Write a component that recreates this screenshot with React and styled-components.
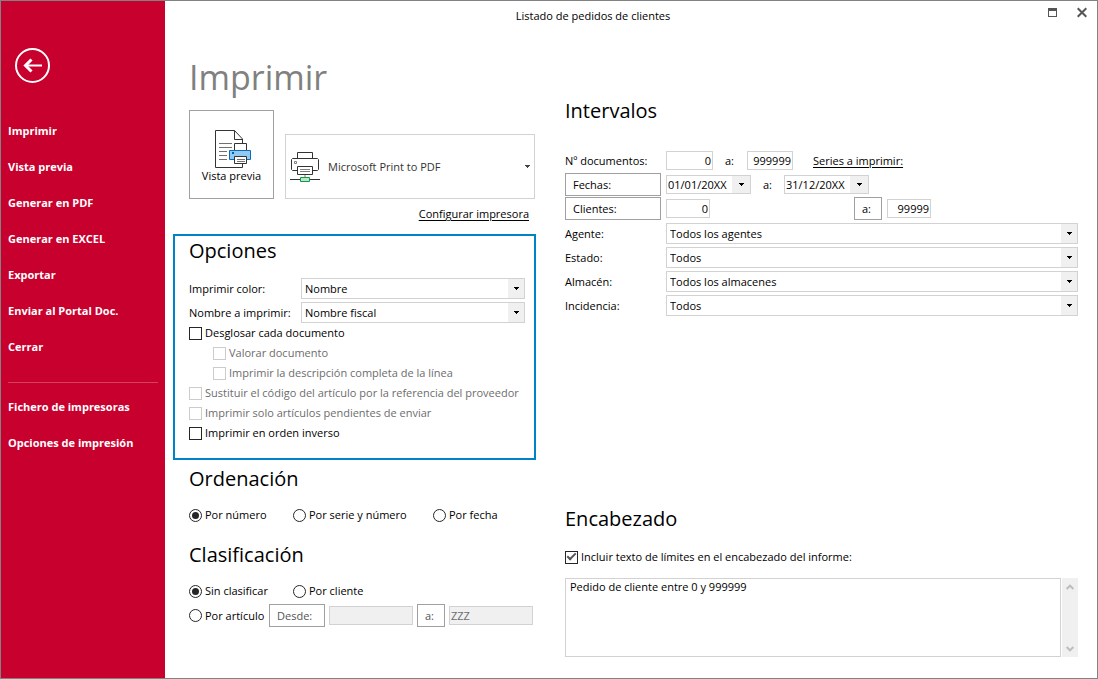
import React from "react";
import styled, { createGlobalStyle, css } from "styled-components";

const Global = createGlobalStyle`
  *, *::before, *::after { box-sizing: border-box; }
  body { margin: 0; background: #fff; }
  body, button, input, select, textarea {
    font-family: "Open Sans", "Noto Sans", sans-serif;
    font-size: 11px;
    line-height: 16px;
    color: #000;
  }
`;

const Window = styled.div`
  display: flex;
  min-height: 100vh;
  border: 1px solid #828282;
`;

/* Sidebar */
const Sidebar = styled.aside`
  flex: none;
  width: 164px;
  padding: 47px 7px 0;
  background: #c8002d;
`;

const BackButton = styled.button`
  display: grid;
  place-items: center;
  width: 35px;
  height: 35px;
  margin: 0 0 30px 7px;
  padding: 0;
  border: 2px solid #fff;
  border-radius: 50%;
  background: none;
`;

const NavItem = styled.a`
  display: block;
  font-size: 11px;
  font-weight: 700;
  line-height: 36px;
  color: #fff;
  text-decoration: none;
  white-space: nowrap;
`;

const Divider = styled.hr`
  height: 1px;
  margin: 17px 0 6px;
  border: 0;
  background: #d6405f;
`;

/* Main area */
const Main = styled.div`
  flex: 1;
  min-width: 0;
`;

const TitleBar = styled.header`
  display: flex;
  height: 30px;
`;

const WindowTitle = styled.div`
  flex: 1;
  font-size: 11px;
  line-height: 30px;
  text-align: center;
`;

const WindowControls = styled.div`
  display: flex;
  gap: 20px;
  padding: 6px 10px 0 27px;
`;

const ControlButton = styled.button`
  display: block;
  height: 11px;
  padding: 0;
  border: 0;
  background: none;
  svg { display: block; }
`;

const Content = styled.main`
  display: grid;
  grid-template-columns: 363px 1fr;
  column-gap: 29px;
  padding: 0 19px 21px 8px;
`;

const Column = styled.div`
  display: flex;
  flex-direction: column;
  min-width: 0;
`;

const PageTitle = styled.h1`
  margin: 0;
  padding: 0 16px;
  font-size: 34px;
  font-weight: 400;
  line-height: 50px;
  color: #808080;
`;

const Heading = styled.h2`
  margin: 0;
  font-size: 20px;
  font-weight: 400;
  line-height: 28px;
`;

const PrintRow = styled.div`
  display: flex;
  align-items: flex-end;
  gap: 11px;
  margin-top: 8px;
  padding: 0 1px 0 16px;
`;

const PreviewButton = styled.button`
  display: flex;
  flex-direction: column;
  align-items: center;
  width: 85px;
  height: 89px;
  padding: 19px 0 0;
  border: 1px solid #a0a0a0;
  background: #fff;
`;

const PrinterPicker = styled.button`
  display: flex;
  align-items: center;
  gap: 8px;
  flex: 1;
  height: 65px;
  padding: 0 4px;
  border: 1px solid #d2d2d2;
  background: #fff;
  color: #333;
  text-align: left;
  span { flex: 1; }
`;

const TextLink = styled.a`
  color: #000;
  text-decoration: underline;
  text-underline-offset: 2px;
  white-space: nowrap;
`;

const ConfigureRow = styled.div`
  display: flex;
  justify-content: flex-end;
  padding: 7px 7px 12px;
`;

const OptionsPanel = styled.section`
  padding: 1px 9px 15px 14px;
  border: 2px solid #0082c8;
`;

const Section = styled.section`
  padding: 0 3px 0 16px;
`;

const Fields = styled.div`
  display: grid;
  grid-template-columns: ${(p) => p.$label}px 1fr;
  align-items: center;
  row-gap: 3px;
  margin-top: ${(p) => p.$top}px;
`;

const SelectBox = styled.div`
  display: grid;
  grid-template-columns: 1fr 16px;
  height: 21px;
  border: 1px solid #d2d2d2;
  select {
    grid-area: 1 / 1 / 2 / 3;
    min-width: 0;
    padding: 0 3px;
    border: 0;
    background: #fff;
    appearance: none;
  }
`;

const ArrowCell = styled.span`
  grid-area: 1 / 2;
  display: grid;
  place-items: center;
  background: #f0f0f0;
  pointer-events: none;
`;

const CheckList = styled.div`
  display: grid;
`;

const Choice = styled.label`
  display: flex;
  align-items: center;
  gap: 3px;
  height: 20px;
  padding-left: ${(p) => (p.$nested ? 24 : 0)}px;
  color: ${(p) => (p.$off ? "#6d6d6d" : "#000")};
  white-space: nowrap;
`;

const mark = css`
  appearance: none;
  display: grid;
  place-items: center;
  flex: none;
  width: 13px;
  height: 13px;
  margin: 0;
  border: 1px solid #262626;
  background: #fff;
`;

const CheckInput = styled.input.attrs({ type: "checkbox" })`
  ${mark}
  &:disabled { border-color: #ccc; }
  &:checked::after {
    content: "";
    width: 9px;
    height: 5px;
    margin-top: -3px;
    border: solid #555;
    border-width: 0 0 2px 2px;
    transform: rotate(-45deg);
  }
`;

const RadioInput = styled.input.attrs({ type: "radio" })`
  ${mark}
  border-radius: 50%;
  &:checked::after {
    content: "";
    width: 7px;
    height: 7px;
    border-radius: 50%;
    background: #262626;
  }
`;

const RadioRow = styled.div`
  display: grid;
  grid-template-columns: 104px 140px 1fr;
  margin-top: 12px;
`;

const ArticleRow = styled.div`
  display: grid;
  grid-template-columns: 76px 56px 84px 28px 84px;
  align-items: center;
  column-gap: 4px;
  margin-top: 2px;
  height: 25px;
`;

const RangeButton = styled.button`
  width: ${(p) => p.$width}px;
  height: 23px;
  padding: 0 7px;
  border: 1px solid #a0a0a0;
  background: #fff;
  text-align: left;
  &:disabled { color: #555; }
`;

const TextInput = styled.input`
  width: ${(p) => p.$width}px;
  height: 19px;
  padding: 0 1px;
  border: 1px solid #d2d2d2;
  background: #fff;
  text-align: ${(p) => (p.$number ? "right" : "left")};
  &:disabled { background: #f0f0f0; color: #6d6d6d; }
`;

const DateBox = styled.div`
  display: flex;
  width: 85px;
  height: 19px;
  border: 1px solid #d2d2d2;
  input {
    flex: 1;
    min-width: 0;
    padding: 0 1px;
    border: 0;
  }
  button {
    display: grid;
    place-items: center;
    width: 18px;
    padding: 0;
    border: 0;
    background: #f0f0f0;
  }
`;

const RangeRow = styled.div`
  display: flex;
  align-items: center;
  height: 23px;
`;

const Between = styled.span`
  width: ${(p) => p.$width}px;
  padding-left: 12px;
`;

const RowLink = styled.span`
  margin-left: 20px;
`;

const Spacer = styled.span`
  width: ${(p) => p.$width}px;
`;

const HeaderText = styled.div`
  display: flex;
  gap: 1px;
  height: 79px;
  margin-top: 11px;
`;

const TextArea = styled.textarea`
  flex: 1;
  min-width: 0;
  padding: 0 4px;
  border: 1px solid #d2d2d2;
  resize: none;
`;

const ScrollStrip = styled.div`
  display: flex;
  flex-direction: column;
  justify-content: space-between;
  width: 16px;
  padding: 4px 0 3px;
  background: #f0f0f0;
  button {
    display: grid;
    place-items: center;
    height: 10px;
    padding: 0;
    border: 0;
    background: none;
  }
`;

const Push = styled.div`
  margin-top: ${(p) => p.$top}px;
`;

const DownArrow = ({ color = "#000" }) => (
  <svg width="5" height="3" viewBox="0 0 5 3" fill={color} shapeRendering="crispEdges">
    <path d="M0 0h5v1h-1v1h-1v1h-1v-1h-1v-1h-1z" />
  </svg>
);

const Chevron = ({ down }) => (
  <svg width="8" height="6" viewBox="0 0 8 6" fill="none" stroke="#bcbcbc" strokeWidth="2">
    <path d={down ? "M.7 1 4 4.4 7.3 1" : "M.7 5 4 1.6 7.3 5"} />
  </svg>
);

const PreviewIcon = () => (
  <svg width="41" height="38" viewBox="-4 0 41 38" fill="none" stroke="#333">
    <path d="M27.5 34v3.5H.5V.5h19l8 8.5v4" fill="#fff" />
    <path d="M19.5.5v9h8" />
    <path d="M4 13.5h13M4 17.5h13M4 21.5h8M4 25.5h8M4 29.5h8" stroke="#707070" />
    <path d="M19.5 20v-6.5h12V20" fill="#fff" />
    <path d="M14.5 20.5h21v9h-21z" fill="#92c9f1" stroke="#0a6cbd" />
    <path d="M17 22h2v2h-2z" fill="#0a5ca8" stroke="none" />
    <path d="M19.5 26.5h12v7h-12z" fill="#fff" />
    <path d="M22 29.5h8M22 31.5h8" stroke="#707070" />
  </svg>
);

const PrinterIcon = () => (
  <svg width="30" height="30" viewBox="0 0 30 30" fill="none" stroke="#333">
    <path d="M7.5 6V.5h15V6" />
    <path d="M7 18.5H2.5l-1-1v-10l1-1h25l1 1v10l-1 1H23" />
    <path d="M4.5 9.5h2v2h-2z" stroke="#808080" />
    <path d="M7.5 14.5h15v8h-15z" fill="#fff" />
    <path d="M10 17.5h10M10 19.5h10" stroke="#808080" />
    <path d="M15 23v2" stroke="#bbb" strokeWidth="2" />
    <path d="M0 27.5h10M20 27.5h10" />
    <path d="M10.5 25.5h9v4h-9z" fill="#bfe5c6" stroke="#109a48" />
  </svg>
);

const ComboField = ({ id, label, value }) => (
  <>
    <label htmlFor={id}>{label}</label>
    <SelectBox>
      <select id={id} defaultValue={value}>
        <option>{value}</option>
      </select>
      <ArrowCell><DownArrow /></ArrowCell>
    </SelectBox>
  </>
);

const Check = ({ children, nested, disabled, checked }) => (
  <Choice $nested={nested} $off={disabled}>
    <CheckInput disabled={disabled} defaultChecked={checked} />
    {children}
  </Choice>
);

const Radio = ({ children, name, checked }) => (
  <Choice>
    <RadioInput name={name} defaultChecked={checked} />
    {children}
  </Choice>
);

const DateField = ({ label, value }) => (
  <DateBox>
    <input aria-label={label} defaultValue={value} />
    <button type="button" aria-label="Calendario"><DownArrow /></button>
  </DateBox>
);

const actions = ["Imprimir", "Vista previa", "Generar en PDF", "Generar en EXCEL", "Exportar", "Enviar al Portal Doc.", "Cerrar"];
const tools = ["Fichero de impresoras", "Opciones de impresión"];

export default function App() {
  return (
    <>
      <Global />
      <Window>
        <Sidebar>
          <BackButton aria-label="Volver">
            <svg width="19" height="15" viewBox="0 0 19 15" fill="none" stroke="#fff">
              <path d="M2 7.5h17" strokeWidth="2" />
              <path d="M8.5 1.500 2.500 7.500l6 6" strokeWidth="3" />
            </svg>
          </BackButton>
          <nav>
            {actions.map((t) => <NavItem key={t} href="#">{t}</NavItem>)}
            <Divider />
            {tools.map((t) => <NavItem key={t} href="#">{t}</NavItem>)}
          </nav>
        </Sidebar>
        <Main>
          <TitleBar>
            <WindowTitle>Listado de pedidos de clientes</WindowTitle>
            <WindowControls>
              <ControlButton aria-label="Maximizar">
                <svg width="9" height="11" viewBox="0 0 9 11" fill="none" stroke="#555" shapeRendering="crispEdges">
                  <path d="M.5 1.5h8v8h-8z" />
                  <path d="M0 2.5h9" strokeWidth="3" />
                </svg>
              </ControlButton>
              <ControlButton aria-label="Cerrar ventana">
                <svg width="10" height="11" viewBox="0 0 10 11" fill="none" stroke="#555" strokeWidth="2">
                  <path d="M.7 1.2 9.3 9.8M9.3 1.2.7 9.8" />
                </svg>
              </ControlButton>
            </WindowControls>
          </TitleBar>
          <Content>
            <Column>
              <Push $top={21}><PageTitle>Imprimir</PageTitle></Push>
              <PrintRow>
                <PreviewButton><PreviewIcon />Vista previa</PreviewButton>
                <PrinterPicker>
                  <PrinterIcon />
                  <span>Microsoft Print to PDF</span>
                  <DownArrow color="#444" />
                </PrinterPicker>
              </PrintRow>
              <ConfigureRow><TextLink href="#">Configurar impresora</TextLink></ConfigureRow>
              <OptionsPanel>
                <Heading>Opciones</Heading>
                <Fields $label={112} $top={13}>
                  <ComboField id="color" label="Imprimir color:" value="Nombre" />
                  <ComboField id="nombre" label="Nombre a imprimir:" value="Nombre fiscal" />
                </Fields>
                <CheckList>
                  <Check>Desglosar cada documento</Check>
                  <Check nested disabled>Valorar documento</Check>
                  <Check nested disabled>Imprimir la descripción completa de la línea</Check>
                  <Check disabled>Sustituir el código del artículo por la referencia del proveedor</Check>
                  <Check disabled>Imprimir solo artículos pendientes de enviar</Check>
                  <Check>Imprimir en orden inverso</Check>
                </CheckList>
              </OptionsPanel>
              <Push $top={5}>
                <Section>
                  <Heading>Ordenación</Heading>
                  <RadioRow>
                    <Radio name="orden" checked>Por número</Radio>
                    <Radio name="orden">Por serie y número</Radio>
                    <Radio name="orden">Por fecha</Radio>
                  </RadioRow>
                </Section>
              </Push>
              <Push $top={16}>
                <Section>
                  <Heading>Clasificación</Heading>
                  <RadioRow>
                    <Radio name="clase" checked>Sin clasificar</Radio>
                    <Radio name="clase">Por cliente</Radio>
                  </RadioRow>
                  <ArticleRow>
                    <Radio name="clase">Por artículo</Radio>
                    <RangeButton $width={56} disabled>Desde:</RangeButton>
                    <TextInput $width={84} disabled aria-label="Desde artículo" />
                    <RangeButton $width={28} disabled>a:</RangeButton>
                    <TextInput $width={84} disabled aria-label="Hasta artículo" defaultValue="ZZZ" />
                  </ArticleRow>
                </Section>
              </Push>
            </Column>
            <Column>
              <Push $top={66}><Heading>Intervalos</Heading></Push>
              <Push $top={24}>
                <Fields $label={101} $top={0}>
                  <label htmlFor="doc-desde">Nº documentos:</label>
                  <RangeRow>
                    <TextInput id="doc-desde" $width={47} $number defaultValue="0" />
                    <Between $width={34}>a:</Between>
                    <TextInput aria-label="Hasta documento" $width={46} $number defaultValue="999999" />
                    <RowLink><TextLink href="#">Series a imprimir:</TextLink></RowLink>
                  </RangeRow>
                </Fields>
              </Push>
              <Push $top={1}>
                <Fields $label={101} $top={0}>
                  <RangeButton $width={96}>Fechas:</RangeButton>
                  <RangeRow>
                    <DateField label="Desde fecha" value="01/01/20XX" />
                    <Between $width={33}>a:</Between>
                    <DateField label="Hasta fecha" value="31/12/20XX" />
                  </RangeRow>
                </Fields>
              </Push>
              <Push $top={1}>
                <Fields $label={101} $top={0}>
                  <RangeButton $width={96}>Clientes:</RangeButton>
                  <RangeRow>
                    <TextInput aria-label="Desde cliente" $width={44} $number defaultValue="0" />
                    <Spacer $width={144} />
                    <RangeButton $width={28}>a:</RangeButton>
                    <Spacer $width={5} />
                    <TextInput aria-label="Hasta cliente" $width={44} $number defaultValue="99999" />
                  </RangeRow>
                </Fields>
              </Push>
              <Fields $label={101} $top={3}>
                <ComboField id="agente" label="Agente:" value="Todos los agentes" />
                <ComboField id="estado" label="Estado:" value="Todos" />
                <ComboField id="almacen" label="Almacén:" value="Todos los almacenes" />
                <ComboField id="incidencia" label="Incidencia:" value="Todos" />
              </Fields>
              <Push $top={189}>
                <Heading>Encabezado</Heading>
                <Push $top={14}>
                  <Check checked>Incluir texto de límites en el encabezado del informe:</Check>
                </Push>
                <HeaderText>
                  <TextArea aria-label="Texto del encabezado" defaultValue="Pedido de cliente entre 0 y 999999" />
                  <ScrollStrip>
                    <button aria-label="Subir"><Chevron /></button>
                    <button aria-label="Bajar"><Chevron down /></button>
                  </ScrollStrip>
                </HeaderText>
              </Push>
            </Column>
          </Content>
        </Main>
      </Window>
    </>
  );
}
